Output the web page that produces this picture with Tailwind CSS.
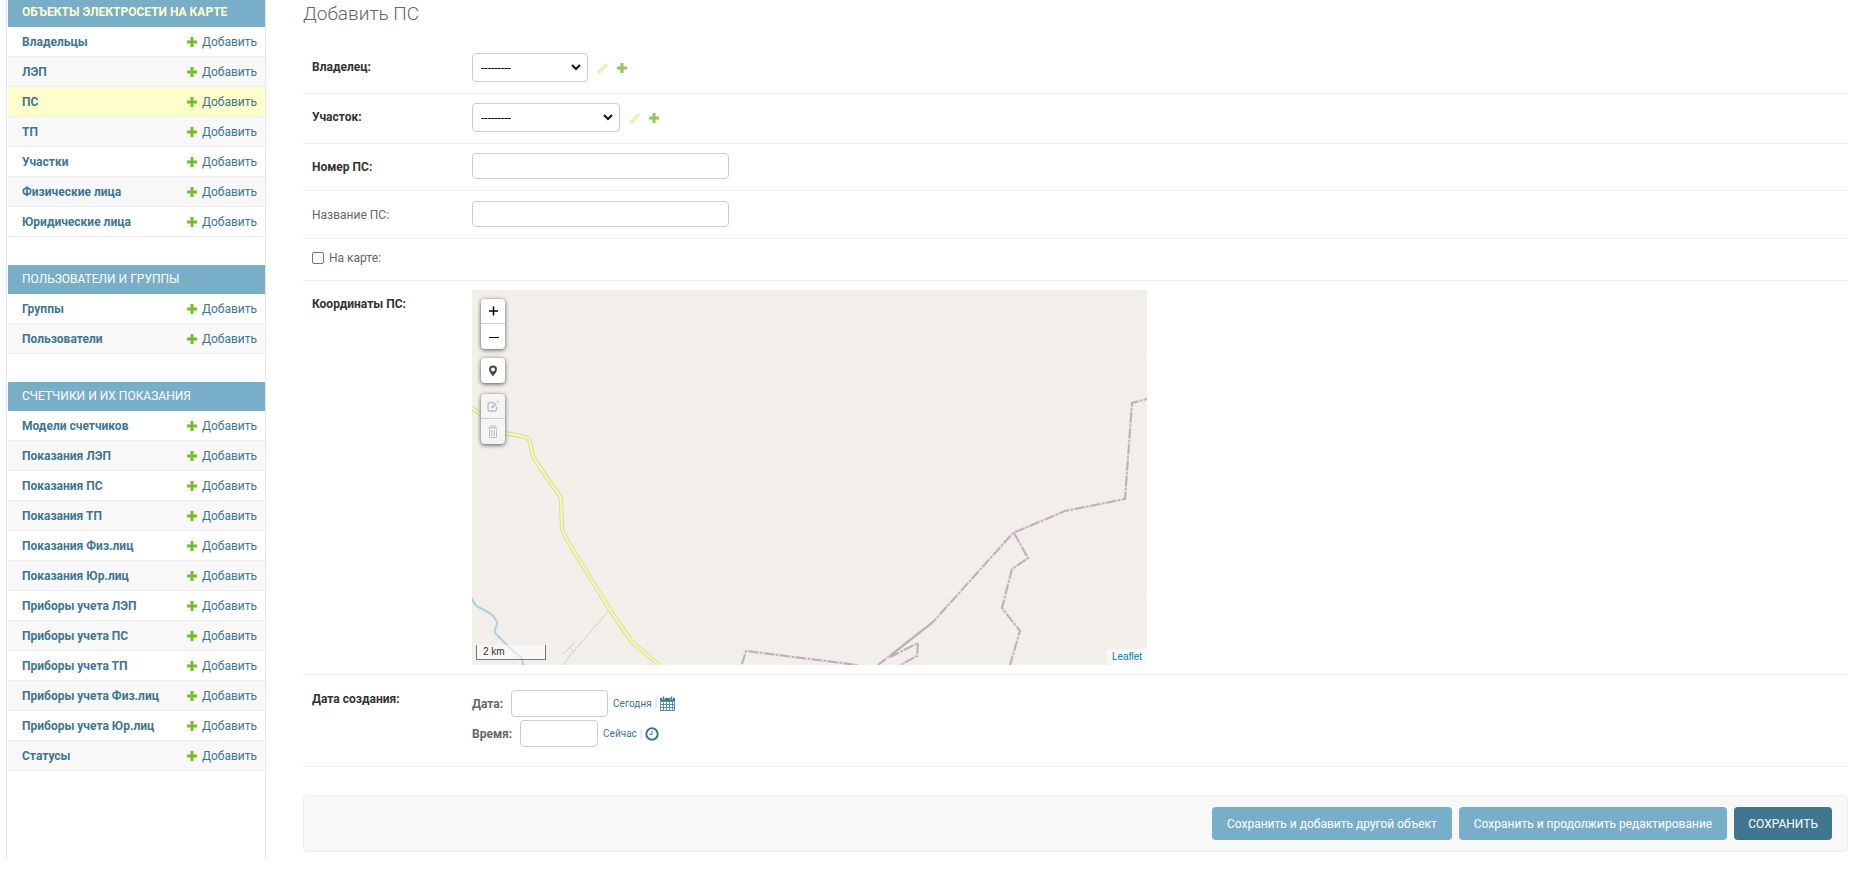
<!DOCTYPE html>
<html lang="ru">
<head>
<meta charset="utf-8">
<title>Добавить ПС</title>
<script src="https://cdn.jsdelivr.net/npm/@tailwindcss/browser@4"></script>
</head>
<body class="flex min-h-screen bg-white pb-[22px] pl-1.5 pr-[13px] font-[Roboto,sans-serif] text-xs text-[#666]">
<svg class="hidden" aria-hidden="true">
  <symbol id="plus" viewBox="0 0 10 10"><path d="M3.500 0h3v3.500H10v3H6.500V10h-3V6.500H0v-3h3.500z" fill="#70bf2b"/></symbol>
  <symbol id="pencil" viewBox="0 0 12 12"><path d="M1 11l1-3 7-6.500 2 2L4 10.500z" fill="#f3e7b8" stroke="#efdfa3" stroke-width=".6"/><path d="M3 9.500l6.500-6" stroke="#fbf6dd"/></symbol>
  <symbol id="chevron" viewBox="0 0 12 8"><path d="M2 2l4 4 4-4" fill="none" stroke="#111" stroke-width="2"/></symbol>
</svg>

<nav class="flex w-[260px] shrink-0 flex-col gap-7 border-x border-[#e8e8e8] pl-px" aria-label="Разделы">
  <table class="w-full border-separate border-spacing-0">
    <caption class="h-[27px] bg-[#79aec8] pl-3.5 text-left text-xs leading-[25px] font-bold uppercase text-[#ffffcc]"><a href="#">Объекты электросети на карте</a></caption>
    <tbody id="t1"></tbody>
  </table>
  <table class="w-full border-separate border-spacing-0">
    <caption class="h-[29px] bg-[#79aec8] pl-3.5 text-left text-xs leading-[29px] uppercase text-white"><a href="#">Пользователи и группы</a></caption>
    <tbody id="t2"></tbody>
  </table>
  <table class="w-full border-separate border-spacing-0">
    <caption class="h-[29px] bg-[#79aec8] pl-3.5 text-left text-xs leading-[29px] uppercase text-white"><a href="#">Счетчики и их показания</a></caption>
    <tbody id="t3"></tbody>
  </table>
</nav>

<main class="ml-[37px] min-w-0 flex-1 pt-0.5">
  <h1 class="mb-[18px] text-[19px] leading-6 font-light">Добавить ПС</h1>
  <form>
    <div class="flex items-start border-b border-[#eee] pt-[9px] pb-[11px] pl-[9px]">
      <label for="owner" class="w-40 shrink-0 leading-7 font-bold text-[#333]">Владелец:</label>
      <div class="flex items-center">
        <div class="relative">
          <select id="owner" class="block h-[29px] w-[116px] appearance-none rounded border border-[#ccc] bg-white pl-2 text-xs text-black"><option>---------</option></select>
          <svg class="pointer-events-none absolute top-2.5 right-1.5 h-2 w-3"><use href="#chevron"/></svg>
        </div>
        <a href="#" aria-label="Изменить владельца" class="ml-[9px]"><svg class="size-3"><use href="#pencil"/></svg></a>
        <a href="#" aria-label="Добавить владельца" class="ml-2"><svg class="size-2.5 opacity-80"><use href="#plus"/></svg></a>
      </div>
    </div>
    <div class="flex items-start border-b border-[#eee] pt-[9px] pb-[11px] pl-[9px]">
      <label for="area" class="w-40 shrink-0 leading-7 font-bold text-[#333]">Участок:</label>
      <div class="flex items-center">
        <div class="relative">
          <select id="area" class="block h-[29px] w-[148px] appearance-none rounded border border-[#ccc] bg-white pl-2 text-xs text-black"><option>---------</option></select>
          <svg class="pointer-events-none absolute top-2.5 right-1.5 h-2 w-3"><use href="#chevron"/></svg>
        </div>
        <a href="#" aria-label="Изменить участок" class="ml-[9px]"><svg class="size-3"><use href="#pencil"/></svg></a>
        <a href="#" aria-label="Добавить участок" class="ml-2"><svg class="size-2.5 opacity-80"><use href="#plus"/></svg></a>
      </div>
    </div>
    <div class="flex items-start border-b border-[#eee] pt-[9px] pb-[11px] pl-[9px]">
      <label for="num" class="w-40 shrink-0 pt-0.5 leading-6 font-bold text-[#333]">Номер ПС:</label>
      <input id="num" type="text" class="h-[26px] w-[257px] rounded border border-[#ccc] px-1.5">
    </div>
    <div class="flex items-start border-b border-[#eee] pt-2.5 pb-[11px] pl-[9px]">
      <label for="name" class="w-40 shrink-0 pt-0.5 leading-6">Название ПС:</label>
      <input id="name" type="text" class="h-[26px] w-[257px] rounded border border-[#ccc] px-1.5">
    </div>
    <div class="flex items-center gap-[5px] border-b border-[#eee] pt-[9px] pb-3 pl-[9px]">
      <input id="onmap" type="checkbox" class="size-3 appearance-none rounded-[2px] border border-[#767676] checked:bg-[#417690]">
      <label for="onmap" class="leading-5">На карте:</label>
    </div>
    <div class="flex items-start border-b border-[#eee] py-[9px] pl-[9px]">
      <span class="w-40 shrink-0 leading-7 font-bold text-[#333]">Координаты ПС:</span>
      <div class="relative h-[375px] w-[675px] overflow-hidden bg-[#f2efea]" aria-label="Карта">
        <svg class="absolute inset-0 size-full" viewBox="0 0 675 375" fill="none">
          <path d="M40 68.500H675M40 308.500H675" stroke="#edeae5"/>
          <path d="M0 308C2 315 5 317 8 318C14 321 17 322 20 325C24 329 26 332 25 335C23 339 22 341 24 344C28 348 31 351 35 355C41 361 46 365 50 368L51 375" stroke="#aad3df" stroke-width="2"/>
          <path d="M137 320L103 360Q95 367 91 375M103 352L91 364M97 357l5 5" stroke="#cfccc8"/>
          <path d="M0 118L10 125L22 139L33 143L53 147Q57 148 58 152L61 167L89 208L90 239L95 250L138 320L160 352L187 375" stroke="#cdd69a" stroke-width="4" stroke-linejoin="round"/>
          <path d="M0 118L10 125L22 139L33 143L53 147Q57 148 58 152L61 167L89 208L90 239L95 250L138 320L160 352L187 375" stroke="#f4f9a8" stroke-width="2.500" stroke-linejoin="round"/>
          <g stroke="#e6dce2" stroke-width="2.500"><path d="M270 374L274 361L385 375M406 375L461 332L541 243L593 221L653 209L660 113L675 109M542 243L556 268L540 279L530 318L548 341L538 375M418 367L446 353L445 366L428 375"/></g>
          <g stroke="#bfb0b9" stroke-width="2" stroke-dasharray="10 2 2 2"><path d="M270 374L274 361L385 375"/><path d="M406 375L461 332L541 243L593 221L653 209L660 113L675 109"/><path d="M542 243L556 268L540 279L530 318L548 341L538 375"/><path d="M418 367L446 353L445 366L428 375"/></g>
          <path d="M418 366L461 332" stroke="#bfb0b9" stroke-width="2"/>
        </svg>
        <div class="absolute top-[9px] left-[9px] flex w-6 flex-col gap-[9px]">
          <div class="flex flex-col overflow-hidden rounded bg-white shadow-[0_1px_4px_rgba(0,0,0,0.65)]">
            <button type="button" aria-label="Приблизить" class="grid h-[25px] place-items-center border-b border-[#ccc]"><svg class="size-3" viewBox="0 0 12 12"><path d="M2 6h9M6.500 1.500v9" stroke="#000" stroke-width="1.500"/></svg></button>
            <button type="button" aria-label="Отдалить" class="grid h-[25px] place-items-center"><svg class="size-3" viewBox="0 0 12 12"><path d="M2 6.500h10" stroke="#000" stroke-width="1.200"/></svg></button>
          </div>
          <div class="flex flex-col overflow-hidden rounded bg-white shadow-[0_1px_4px_rgba(0,0,0,0.65)]">
            <button type="button" aria-label="Поставить маркер" class="grid h-[25px] place-items-center"><svg class="h-3 w-2.5" viewBox="0 0 10 12"><path fill-rule="evenodd" d="M5 .5a4 4 0 0 1 4 4C9 7 6.500 9 5 11.500C3.500 9 1 7 1 4.500a4 4 0 0 1 4-4zm0 2a2 2 0 1 0 0 4a2 2 0 0 0 0-4z" fill="#464646"/></svg></button>
          </div>
          <div class="mt-0.5 flex flex-col overflow-hidden rounded bg-[#f4f4f4] shadow-[0_1px_4px_rgba(0,0,0,0.65)]">
            <button type="button" disabled aria-label="Править слои" class="grid h-[25px] place-items-center border-b border-[#ccc]"><svg class="size-3" viewBox="0 0 12 12" fill="none" stroke="#bbb"><path d="M7 2.500H3A2 2 0 0 0 1 4.500V9a2 2 0 0 0 2 2h4.500a2 2 0 0 0 2-2V6.500" stroke-width="1.300"/><path d="M4.500 8L9 3.500" stroke-width="2"/><path d="M10.500 1l1 1" stroke-width="1.500"/></svg></button>
            <button type="button" disabled aria-label="Удалить слои" class="grid h-[25px] place-items-center"><svg class="h-[13px] w-3" viewBox="0 0 12 13" fill="none" stroke="#bdbdbd"><path d="M1 3h10M4 3V1h4v2" stroke-width="1.200"/><path d="M2.500 4.500v8h7v-8"/><path d="M4.500 5v6M6 5v6M7.500 5v6" stroke-width=".7"/></svg></button>
          </div>
        </div>
        <div class="absolute bottom-[5px] left-1 h-[15px] w-[70px] border-x border-b border-[#777] bg-white/50 pl-1.5 font-['Liberation_Sans',sans-serif] text-[10px] leading-[14px] text-[#333]">2 km</div>
        <div class="absolute right-0 bottom-0 bg-white/70 px-[5px] font-['Liberation_Sans',sans-serif] text-[10px] leading-4"><a href="#" class="text-[#0078a8]">Leaflet</a></div>
      </div>
    </div>
    <div class="flex items-start border-b border-[#eee] pt-[15px] pb-[19px] pl-[9px]">
      <span class="w-40 shrink-0 leading-[18px] font-bold text-[#333]">Дата создания:</span>
      <div class="flex flex-col gap-[3px]">
        <div class="flex items-center">
          <label for="date" class="mr-2 font-bold">Дата:</label>
          <input id="date" type="text" class="h-[27px] w-[97px] rounded border border-[#ccc] px-1.5">
          <a href="#" class="ml-[5px] text-[10px] text-[#417690]">Сегодня</a>
          <span class="mx-[3px] text-[10px] text-[#ccc]">|</span>
          <a href="#" aria-label="Календарь"><svg class="size-[15px]" viewBox="0 0 15 15" fill="none" stroke="#417690"><path d="M.5 5.500h14v9H.5zM3.500 5.500v9M6.500 5.500v9M9.500 5.500v9M12.500 5.500v9M.5 8.500h14M.5 11.500h14" stroke-width=".8"/><path d="M0 2h15v3H0z" fill="#417690" stroke="none"/><path d="M3.500 0v3.500M11.500 0v3.500" stroke="#fff" stroke-width="3"/><path d="M3.500 .5v3M11.500 .5v3" stroke-width="1.600"/></svg></a>
        </div>
        <div class="flex items-center">
          <label for="time" class="mr-2 font-bold">Время:</label>
          <input id="time" type="text" class="h-[27px] w-[78px] rounded border border-[#ccc] px-1.5">
          <a href="#" class="ml-[5px] text-[10px] text-[#417690]">Сейчас</a>
          <span class="mx-[3px] text-[10px] text-[#ccc]">|</span>
          <a href="#" aria-label="Часы"><svg class="size-[14px]" viewBox="0 0 14 14" fill="none" stroke="#417690"><circle cx="7" cy="7" r="5.700" stroke-width="2"/><path d="M7 4v3.500H4.500"/></svg></a>
        </div>
      </div>
    </div>
    <div class="mt-7 flex justify-end gap-[7px] rounded border border-[#eee] bg-[#f8f8f8] px-[15px] py-[11px]">
      <button type="button" class="h-[33px] rounded bg-[#79aec8] px-[15px] text-xs text-white">Сохранить и добавить другой объект</button>
      <button type="button" class="h-[33px] rounded bg-[#79aec8] px-[15px] text-xs text-white">Сохранить и продолжить редактирование</button>
      <button type="submit" class="h-[33px] rounded bg-[#417690] px-3.5 text-xs text-white uppercase">Сохранить</button>
    </div>
  </form>
</main>
<script>
const sections = {
  t1: ['Владельцы','ЛЭП','ПС','ТП','Участки','Физические лица','Юридические лица'],
  t2: ['Группы','Пользователи'],
  t3: ['Модели счетчиков','Показания ЛЭП','Показания ПС','Показания ТП','Показания Физ.лиц','Показания Юр.лиц','Приборы учета ЛЭП','Приборы учета ПС','Приборы учета ТП','Приборы учета Физ.лиц','Приборы учета Юр.лиц','Статусы']
};
for (const [id, names] of Object.entries(sections)) {
  document.getElementById(id).innerHTML = names.map((n, i) => `
    <tr class="h-[30px] text-[#417690] ${n === 'ПС' ? 'bg-[#ffffcc]' : i % 2 ? 'bg-[#f8f8f8]' : 'bg-white'}">
      <th scope="row" class="border-b border-[#eee] p-0 pl-3.5 text-left font-bold"><a href="#">${n}</a></th>
      <td class="border-b border-[#eee] p-0 pr-2"><a href="#" class="flex items-center justify-end gap-[5px]"><svg class="size-2.5"><use href="#plus"/></svg>Добавить</a></td>
    </tr>`).join('');
}
</script>
</body>
</html>
